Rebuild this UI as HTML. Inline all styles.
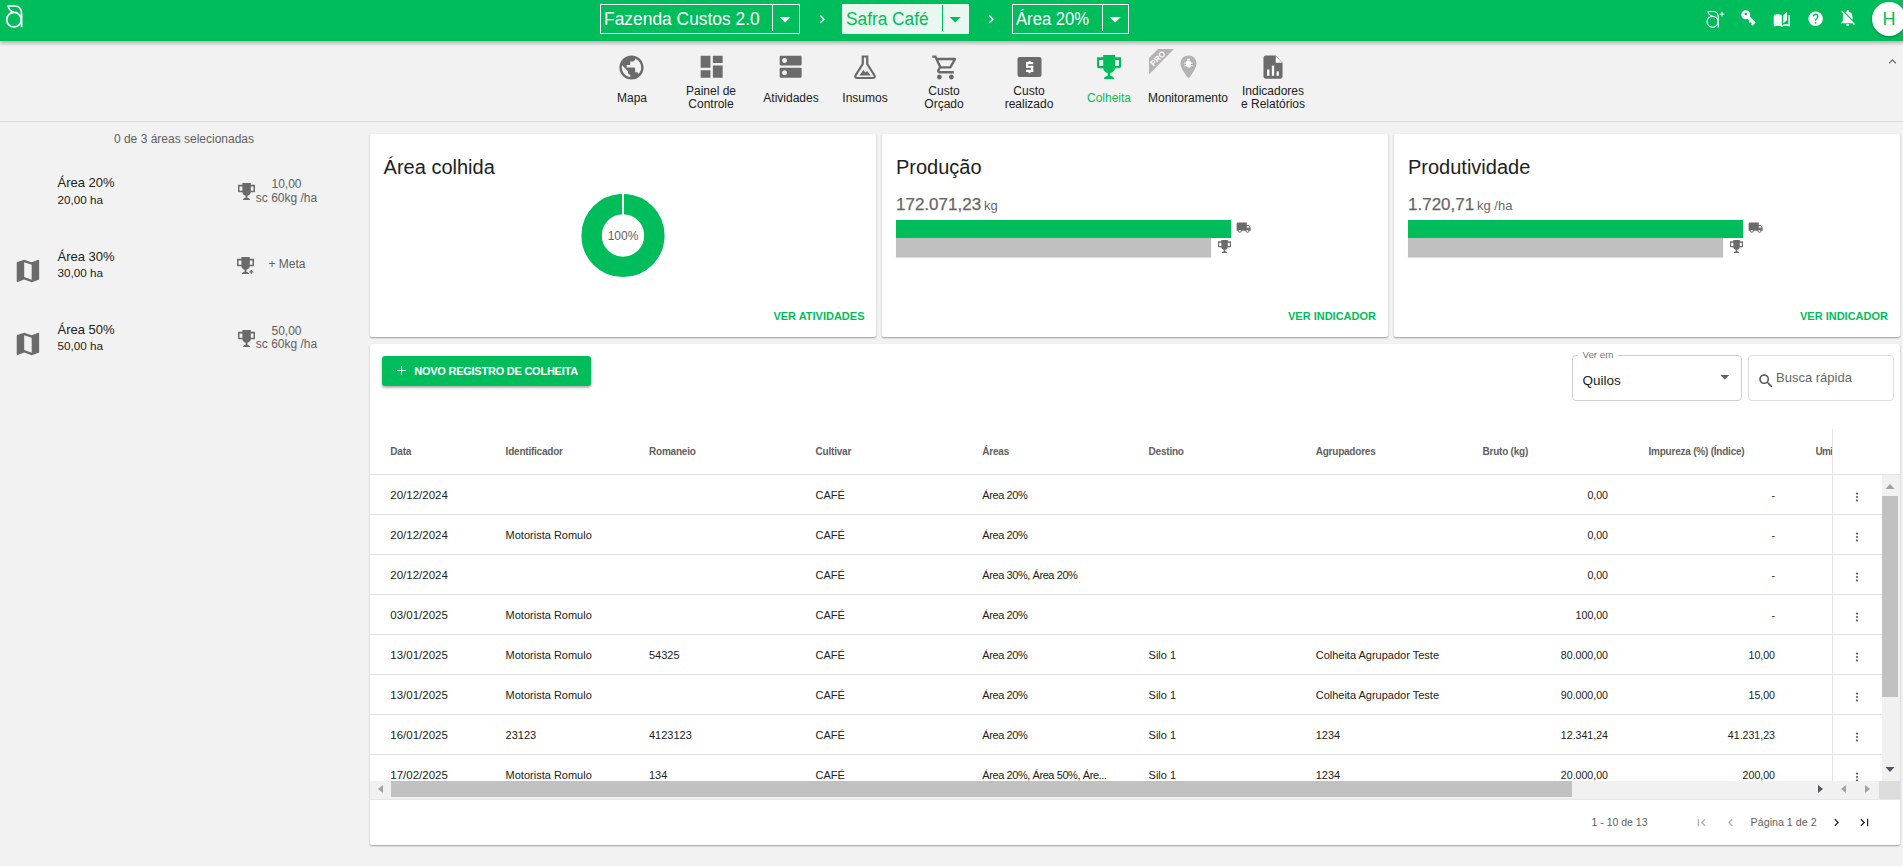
<!DOCTYPE html><html><head><meta charset="utf-8"><style>
html,body{margin:0;padding:0;width:1903px;height:866px;overflow:hidden;background:#F2F2F2;font-family:"Liberation Sans", sans-serif;}
body{position:relative;}
div,svg{box-sizing:border-box;}
</style></head><body>
<div style="position:absolute;left:0px;top:121px;width:1903px;height:1px;background:#DADADA;"></div>
<div style="position:absolute;left:370px;top:134px;width:506px;height:203px;background:#fff;border-radius:2px;box-shadow:0 1px 2px rgba(0,0,0,0.28),0 1px 1px rgba(0,0,0,0.10);"></div>
<div style="position:absolute;left:882px;top:134px;width:506px;height:203px;background:#fff;border-radius:2px;box-shadow:0 1px 2px rgba(0,0,0,0.28),0 1px 1px rgba(0,0,0,0.10);"></div>
<div style="position:absolute;left:1394px;top:134px;width:506px;height:203px;background:#fff;border-radius:2px;box-shadow:0 1px 2px rgba(0,0,0,0.28),0 1px 1px rgba(0,0,0,0.10);"></div>
<div style="position:absolute;left:370px;top:344px;width:1530px;height:501px;background:#fff;border-radius:2px;box-shadow:0 1px 2px rgba(0,0,0,0.28),0 1px 1px rgba(0,0,0,0.10);"></div>
<div style="position:absolute;left:0px;top:0px;width:1903px;height:41px;background:#00BD5C;box-shadow:0 2px 4px rgba(0,0,0,0.3);"></div>
<svg style="position:absolute;left:0px;top:0px;" width="30" height="30" viewBox="0 0 30 30" preserveAspectRatio="none"><g fill="none" stroke="#fff" stroke-width="1.7"><circle cx="14" cy="19.7" r="7.3"/><path d="M21.6 27.2 V14 C21.6 8.8 19.2 6 14.8 6 H8.2 C8.6 9.3 10.6 11.4 14 12.4"/></g></svg>
<div style="position:absolute;left:600px;top:4px;width:200px;height:30px;border:1px solid #fff;"></div>
<div style="position:absolute;left:772px;top:5px;width:1px;height:26.3px;background:#fff;"></div>
<div style="position:absolute;left:604px;top:9.96px;font-size:18px;line-height:18px;color:#fff;font-weight:400;white-space:nowrap;display:inline-block;transform:scaleX(0.967);transform-origin:0 0;">Fazenda Custos 2.0</div>
<svg style="position:absolute;left:772.3px;top:5.8px;" width="26.4" height="26.4" viewBox="0 0 24 24" preserveAspectRatio="none"><path d="M7 10l5 5 5-5z" fill="#fff" fill-rule="evenodd"/></svg>
<div style="position:absolute;left:842px;top:4px;width:127px;height:30px;background:#E8F7EF;"></div>
<div style="position:absolute;left:942px;top:5px;width:1px;height:26.3px;background:#00BD5C;"></div>
<div style="position:absolute;left:846px;top:9.96px;font-size:18px;line-height:18px;color:#00BD5C;font-weight:400;white-space:nowrap;display:inline-block;transform:scaleX(0.96);transform-origin:0 0;">Safra Café</div>
<svg style="position:absolute;left:942.3px;top:5.8px;" width="26.4" height="26.4" viewBox="0 0 24 24" preserveAspectRatio="none"><path d="M7 10l5 5 5-5z" fill="#00BD5C" fill-rule="evenodd"/></svg>
<div style="position:absolute;left:1012px;top:4px;width:117px;height:30px;border:1px solid #fff;"></div>
<div style="position:absolute;left:1102px;top:5px;width:1px;height:26.3px;background:#fff;"></div>
<div style="position:absolute;left:1016px;top:9.96px;font-size:18px;line-height:18px;color:#fff;font-weight:400;white-space:nowrap;display:inline-block;transform:scaleX(0.924);transform-origin:0 0;">Área 20%</div>
<svg style="position:absolute;left:1102.3px;top:5.8px;" width="26.4" height="26.4" viewBox="0 0 24 24" preserveAspectRatio="none"><path d="M7 10l5 5 5-5z" fill="#fff" fill-rule="evenodd"/></svg>
<svg style="position:absolute;left:813.8px;top:10.6px;" width="16.4" height="16.4" viewBox="0 0 24 24" preserveAspectRatio="none"><path d="M10 6L8.59 7.41 13.17 12l-4.58 4.59L10 18l6-6z" fill="#fff" fill-rule="evenodd"/></svg>
<svg style="position:absolute;left:982.8px;top:10.6px;" width="16.4" height="16.4" viewBox="0 0 24 24" preserveAspectRatio="none"><path d="M10 6L8.59 7.41 13.17 12l-4.58 4.59L10 18l6-6z" fill="#fff" fill-rule="evenodd"/></svg>
<svg style="position:absolute;left:1701.96px;top:7.47px;" width="22.6" height="22.6" viewBox="0 0 30 30" preserveAspectRatio="none"><g fill="none" stroke="#fff" stroke-width="1.5"><circle cx="14" cy="19.7" r="7.3"/><path d="M21.6 27.2 V14 C21.6 8.8 19.2 6 14.8 6 H8.2 C8.6 9.3 10.6 11.4 14 12.4"/></g><path d="M26.6 6.4 V12.5 M23.5 9.47 H29.7" stroke="#fff" stroke-width="1.25"/></svg>
<svg style="position:absolute;left:1738px;top:7px;" width="22" height="22" viewBox="0 0 22 22" preserveAspectRatio="none"><g transform="translate(7.7 7.7) rotate(45)"><path fill="#fff" fill-rule="evenodd" d="M4.5 0A4.5 4.5 0 1 1 -4.5 0A4.5 4.5 0 1 1 4.5 0ZM0.8 -0.6A1.3 1.3 0 1 0 -1.8 -0.6A1.3 1.3 0 1 0 0.8 -0.6Z"/><path fill="#fff" d="M3.5 -1.6H12.6V2.9H10.6V1.9H8.8V2.9H7V1.6H3.5Z"/></g></svg>
<svg style="position:absolute;left:1773.2px;top:10.6px;" width="17.6" height="17.6" viewBox="0 0 24 24" preserveAspectRatio="none"><path d="M19 1l-5 5v11l5-4.5V1zM1 6v14.65c0 .25.25.5.5.5.1 0 .15-.05.25-.05C3.1 20.45 5.05 20 6.5 20c1.95 0 4.050.4 5.5 1.5V6c-1.45-1.1-3.55-1.5-5.5-1.5S2.45 4.9 1 6zm22 13.5V6c-.6-.45-1.25-.75-2-1v13.5c-1.1-.35-2.3-.5-3.5-.5-1.7 0-4.15.65-5.5 1.5v2c1.350-.85 3.8-1.5 5.5-1.5 1.65 0 3.35.3 4.75 1.05.1.05.15.05.25.05.25 0 .5-.25.5-.5v-1.1z" fill="#fff" fill-rule="evenodd"/></svg>
<svg style="position:absolute;left:1807px;top:9.9px;" width="17.3" height="17.3" viewBox="0 0 24 24" preserveAspectRatio="none"><path d="M12 2C6.48 2 2 6.48 2 12s4.48 10 10 10 10-4.48 10-10S17.52 2 12 2zm1 17h-2v-2h2v2zm2.07-7.75l-.9.92C13.45 12.9 13 13.5 13 15h-2v-.5c0-1.1.45-2.1 1.17-2.83l1.24-1.26c.37-.36.59-.86.59-1.41 0-1.1-.9-2-2-2s-2 .9-2 2H8c0-2.21 1.79-4 4-4s4 1.79 4 4c0 .88-.36 1.68-.93 2.25z" fill="#fff" fill-rule="evenodd"/></svg>
<svg style="position:absolute;left:1838.2px;top:8px;" width="19.4" height="19.4" viewBox="0 0 24 24" preserveAspectRatio="none"><path d="M20 18.69L7.84 6.14 5.27 3.49 4 4.76l2.8 2.8v.01c-.52.99-.8 2.16-.8 3.42v5l-2 2v1h13.73l2 2L21 19.72l-1-1.03zM12 22c1.11 0 2-.89 2-2h-4c0 1.11.89 2 2 2zm6-7.32V11c0-3.08-1.64-5.64-4.5-6.32V4c0-.83-.67-1.5-1.5-1.5s-1.5.67-1.5 1.5v.68c-.15.03-.29.08-.42.12-.1.03-.2.07-.3.11h-.01c-.01 0-.01 0-.02.01-.23.09-.46.2-.68.31 0 0-.01 0-.01.01L18 14.68z" fill="#fff" fill-rule="evenodd"/></svg>
<div style="position:absolute;left:1872px;top:2px;width:34px;height:34px;border-radius:50%;background:#fff;box-shadow:0 1px 3px rgba(0,0,0,0.3);"></div>
<div style="position:absolute;left:1869.0px;width:40px;text-align:center;top:9.76px;font-size:18px;line-height:18px;color:#00BD5C;font-weight:400;white-space:nowrap;">H</div>
<svg style="position:absolute;left:617.1px;top:52.7px;" width="29" height="29" viewBox="0 0 24 24" preserveAspectRatio="none"><path d="M12 2C6.48 2 2 6.48 2 12s4.48 10 10 10 10-4.48 10-10S17.52 2 12 2zm-1 17.93c-3.95-.49-7-3.85-7-7.93 0-.62.08-1.21.21-1.79L9 15v1c0 1.1.9 2 2 2v1.93zm6.9-2.54c-.26-.81-1-1.39-1.9-1.39h-1v-3c0-.55-.45-1-1-1H8v-2h2c.55 0 1-.45 1-1V7h2c1.1 0 2-.9 2-2v-.41c2.93 1.19 5 4.06 5 7.41 0 2.08-.8 3.97-2.1 5.39z" fill="#6B6B6B" fill-rule="evenodd"/></svg>
<div style="position:absolute;left:572.0px;width:120px;text-align:center;top:91.64px;font-size:12px;line-height:12px;color:#212121;font-weight:400;white-space:nowrap;">Mapa</div>
<svg style="position:absolute;left:696.8px;top:52.3px;" width="29.3" height="29.3" viewBox="0 0 24 24" preserveAspectRatio="none"><path d="M3 13h8V3H3v10zm0 8h8v-6H3v6zm10 0h8V11h-8v10zm0-18v6h8V3h-8z" fill="#6B6B6B" fill-rule="evenodd"/></svg>
<div style="position:absolute;left:651.0px;width:120px;text-align:center;top:85.14px;font-size:12px;line-height:12px;color:#212121;font-weight:400;white-space:nowrap;">Painel de</div>
<div style="position:absolute;left:651.0px;width:120px;text-align:center;top:97.84px;font-size:12px;line-height:12px;color:#212121;font-weight:400;white-space:nowrap;">Controle</div>
<svg style="position:absolute;left:776px;top:52.3px;" width="29.3" height="29.3" viewBox="0 0 24 24" preserveAspectRatio="none"><path d="M20 13H4c-.55 0-1 .45-1 1v6c0 .55.45 1 1 1h16c.55 0 1-.45 1-1v-6c0-.55-.45-1-1-1zM7 19c-1.1 0-2-.9-2-2s.9-2 2-2 2 .9 2 2-.9 2-2 2zM20 3H4c-.55 0-1 .45-1 1v6c0 .55.45 1 1 1h16c.55 0 1-.45 1-1V4c0-.55-.45-1-1-1zM7 9c-1.1 0-2-.9-2-2s.9-2 2-2 2 .9 2 2-.9 2-2 2z" fill="#6B6B6B" fill-rule="evenodd"/></svg>
<div style="position:absolute;left:731.0px;width:120px;text-align:center;top:91.64px;font-size:12px;line-height:12px;color:#212121;font-weight:400;white-space:nowrap;">Atividades</div>
<svg style="position:absolute;left:853px;top:54px;" width="24" height="26" viewBox="0 0 24 26" preserveAspectRatio="none"><g transform="translate(12 0) scale(1.12 1) translate(-12 0)"><g fill="none" stroke="#6B6B6B" stroke-width="2" stroke-linejoin="round"><path d="M9 2.5 H15 M10 3 V10 L3.5 21.5 C3 22.8 3.6 24 5 24 H19 C20.4 24 21 22.8 20.5 21.5 L14 10 V3"/></g><path d="M7 21.5 L10.5 16 L12.5 18.5 L14 17 L17 21.5 Z" fill="#6B6B6B"/></g></svg>
<div style="position:absolute;left:805.0px;width:120px;text-align:center;top:91.64px;font-size:12px;line-height:12px;color:#212121;font-weight:400;white-space:nowrap;">Insumos</div>
<svg style="position:absolute;left:930.5px;top:52.6px;" width="28.8" height="28.8" viewBox="0 0 24 24" preserveAspectRatio="none"><path d="M15.55 13c.75 0 1.41-.41 1.75-1.03l3.58-6.49c.37-.66-.11-1.48-.87-1.48H5.21l-.94-2H1v2h2l3.6 7.59-1.35 2.44C4.52 15.37 5.48 17 7 17h12v-2H7l1.1-2h7.45zM6.16 6h12.15l-2.76 5H8.53L6.16 6zM7 18c-1.1 0-1.99.9-1.99 2S5.9 22 7 22s2-.9 2-2-.9-2-2-2zm10 0c-1.1 0-1.99.9-1.99 2s.89 2 1.99 2 2-.9 2-2-.9-2-2-2z" fill="#6B6B6B" fill-rule="evenodd"/></svg>
<div style="position:absolute;left:884.0px;width:120px;text-align:center;top:85.14px;font-size:12px;line-height:12px;color:#212121;font-weight:400;white-space:nowrap;">Custo</div>
<div style="position:absolute;left:884.0px;width:120px;text-align:center;top:97.84px;font-size:12px;line-height:12px;color:#212121;font-weight:400;white-space:nowrap;">Orçado</div>
<svg style="position:absolute;left:1016px;top:56px;" width="26" height="22" viewBox="0 0 26 22" preserveAspectRatio="none"><rect x="1.5" y="1.1" width="24" height="19.8" rx="2.2" fill="#6B6B6B"/><rect x="12.6" y="4.9" width="2.0" height="1.3" fill="#fff"/><rect x="10.0" y="6.0" width="7.2" height="2.1" fill="#fff"/><rect x="10.0" y="6.0" width="2.2" height="5.8" fill="#fff"/><rect x="10.0" y="9.8" width="7.2" height="2.0" fill="#fff"/><rect x="15.0" y="9.8" width="2.2" height="6.2" fill="#fff"/><rect x="10.0" y="13.8" width="7.2" height="2.2" fill="#fff"/><rect x="12.6" y="16.0" width="2.0" height="1.2" fill="#fff"/></svg>
<div style="position:absolute;left:969.0px;width:120px;text-align:center;top:85.14px;font-size:12px;line-height:12px;color:#212121;font-weight:400;white-space:nowrap;">Custo</div>
<div style="position:absolute;left:969.0px;width:120px;text-align:center;top:97.84px;font-size:12px;line-height:12px;color:#212121;font-weight:400;white-space:nowrap;">realizado</div>
<svg style="position:absolute;left:1096.9px;top:54.9px;" width="24" height="24" viewBox="0 0 24 24" preserveAspectRatio="none"><path d="M6.2 0H18.1V2.3H24V11.5Q24 13.2 22.3 13.2H18.1C17.8 15.6 15.8 17.5 13.3 17.9V20.8C15.5 21 16.9 22.5 17.1 24H6.9C7.1 22.5 8.5 21 10.7 20.8V17.9C8.2 17.5 6.5 15.6 6.2 13.2H1.7Q0 13.2 0 11.5V2.3H6.2ZM2.1 5.1V11.1H6.2V5.1ZM18.1 5.1V11.1H21.9V5.1Z" fill="#00BD5C" fill-rule="evenodd"/></svg>
<div style="position:absolute;left:1049.0px;width:120px;text-align:center;top:91.64px;font-size:12px;line-height:12px;color:#00BD5C;font-weight:400;white-space:nowrap;">Colheita</div>
<svg style="position:absolute;left:1148px;top:48px;" width="27" height="27" viewBox="0 0 27 27" preserveAspectRatio="none"><path d="M10.1 1 H25.9 L1 26.6 V10 Z" fill="#B3B3B3"/><text x="9.6" y="13.4" font-family="Liberation Sans" font-weight="700" font-size="8.2" fill="#fff" text-anchor="middle" transform="rotate(-45 9.6 10.4)">PRO</text></svg>
<svg style="position:absolute;left:1180px;top:55px;" width="17" height="24" viewBox="0 0 17 24" preserveAspectRatio="none"><path d="M8.5 0.5 C4 0.5 0.5 4 0.5 8.5 C0.5 14 8.5 23.5 8.5 23.5 C8.5 23.5 16.5 14 16.5 8.5 C16.5 4 13 0.5 8.5 0.5 Z" fill="#B3B3B3"/><g fill="#fff"><rect x="6" y="5.5" width="5" height="7" rx="2.2"/><rect x="4.5" y="7.5" width="8" height="1.2"/><rect x="4.5" y="10" width="8" height="1.2"/><rect x="7" y="3.8" width="3" height="1.5"/></g></svg>
<div style="position:absolute;left:1128.0px;width:120px;text-align:center;top:91.64px;font-size:12px;line-height:12px;color:#212121;font-weight:400;white-space:nowrap;">Monitoramento</div>
<svg style="position:absolute;left:1263px;top:54.9px;" width="20" height="24.2" viewBox="0 0 22 25" preserveAspectRatio="none"><path d="M3 0.5 H14 L21.5 8 V22 C21.5 23.4 20.4 24.5 19 24.5 H3 C1.6 24.5 0.5 23.4 0.5 22 V3 C0.5 1.6 1.6 0.5 3 0.5 Z" fill="#6B6B6B"/><path d="M14 1 V8 H21 Z" fill="#fff"/><g fill="#fff"><rect x="4.5" y="15" width="2.6" height="6.5"/><rect x="9.7" y="11" width="2.6" height="10.5"/><rect x="14.9" y="17" width="2.6" height="4.5"/></g></svg>
<div style="position:absolute;left:1213.0px;width:120px;text-align:center;top:85.14px;font-size:12px;line-height:12px;color:#212121;font-weight:400;white-space:nowrap;">Indicadores</div>
<div style="position:absolute;left:1213.0px;width:120px;text-align:center;top:97.84px;font-size:12px;line-height:12px;color:#212121;font-weight:400;white-space:nowrap;">e Relatórios</div>
<svg style="position:absolute;left:1885px;top:54px;" width="15" height="15" viewBox="0 0 24 24" preserveAspectRatio="none"><path d="M12 8l-6 6 1.41 1.41L12 10.83l4.59 4.58L18 14z" fill="#6B6B6B" fill-rule="evenodd"/></svg>
<div style="position:absolute;left:34.0px;width:300px;text-align:center;top:132.94px;font-size:12px;line-height:12px;color:#616161;font-weight:400;white-space:nowrap;">0 de 3 áreas selecionadas</div>
<div style="position:absolute;left:57.5px;top:176.00px;font-size:13px;line-height:13px;color:#212121;font-weight:400;white-space:nowrap;">Área 20%</div>
<div style="position:absolute;left:57.5px;top:193.50px;font-size:11.7px;line-height:11.7px;color:#212121;font-weight:400;white-space:nowrap;">20,00 ha</div>
<div style="position:absolute;left:57.5px;top:249.80px;font-size:13px;line-height:13px;color:#212121;font-weight:400;white-space:nowrap;">Área 30%</div>
<div style="position:absolute;left:57.5px;top:267.30px;font-size:11.7px;line-height:11.7px;color:#212121;font-weight:400;white-space:nowrap;">30,00 ha</div>
<div style="position:absolute;left:57.5px;top:322.60px;font-size:13px;line-height:13px;color:#212121;font-weight:400;white-space:nowrap;">Área 50%</div>
<div style="position:absolute;left:57.5px;top:340.10px;font-size:11.7px;line-height:11.7px;color:#212121;font-weight:400;white-space:nowrap;">50,00 ha</div>
<svg style="position:absolute;left:12.9px;top:255.7px;" width="29.9" height="29.9" viewBox="0 0 24 24" preserveAspectRatio="none"><path d="M20.5 3l-.16.03L15 5.1 9 3 3.36 4.9c-.21.07-.36.25-.36.48V20.5c0 .28.22.5.5.5l.16-.03L9 18.9l6 2.1 5.64-1.9c.21-.07.36-.25.36-.48V3.5c0-.28-.22-.5-.5-.5zM15 19l-6-2.11V5l6 2.11V19z" fill="#6B6B6B" fill-rule="evenodd"/></svg>
<svg style="position:absolute;left:12.9px;top:328.8px;" width="29.9" height="29.9" viewBox="0 0 24 24" preserveAspectRatio="none"><path d="M20.5 3l-.16.03L15 5.1 9 3 3.36 4.9c-.21.07-.36.25-.36.48V20.5c0 .28.22.5.5.5l.16-.03L9 18.9l6 2.1 5.64-1.9c.21-.07.36-.25.36-.48V3.5c0-.28-.22-.5-.5-.5zM15 19l-6-2.11V5l6 2.11V19z" fill="#6B6B6B" fill-rule="evenodd"/></svg>
<svg style="position:absolute;left:238px;top:183px;" width="17" height="17" viewBox="0 0 24 24" preserveAspectRatio="none"><path d="M6.2 0H18.1V2.3H24V11.5Q24 13.2 22.3 13.2H18.1C17.8 15.6 15.8 17.5 13.3 17.9V20.8C15.5 21 16.9 22.5 17.1 24H6.9C7.1 22.5 8.5 21 10.7 20.8V17.9C8.2 17.5 6.5 15.6 6.2 13.2H1.7Q0 13.2 0 11.5V2.3H6.2ZM2.1 5.1V11.1H6.2V5.1ZM18.1 5.1V11.1H21.9V5.1Z" fill="#6B6B6B" fill-rule="evenodd"/></svg>
<div style="position:absolute;left:236.5px;width:100px;text-align:center;top:178.24px;font-size:12px;line-height:12px;color:#616161;font-weight:400;white-space:nowrap;">10,00</div>
<div style="position:absolute;left:236.5px;width:100px;text-align:center;top:191.84px;font-size:12px;line-height:12px;color:#616161;font-weight:400;white-space:nowrap;">sc 60kg /ha</div>
<svg style="position:absolute;left:237px;top:257px;" width="17" height="17" viewBox="0 0 24 24" preserveAspectRatio="none"><path d="M6.2 0H18.1V2.3H24V11.5Q24 13.2 22.3 13.2H18.1C17.8 15.6 15.8 17.5 13.3 17.9V20.8C15.5 21 16.9 22.5 17.1 24H6.9C7.1 22.5 8.5 21 10.7 20.8V17.9C8.2 17.5 6.5 15.6 6.2 13.2H1.7Q0 13.2 0 11.5V2.3H6.2ZM2.1 5.1V11.1H6.2V5.1ZM18.1 5.1V11.1H21.9V5.1Z" fill="#6B6B6B" fill-rule="evenodd"/><path d="M17.5 21 H23 M20.2 18.2 V23.8" stroke="#6B6B6B" stroke-width="2"/></svg>
<div style="position:absolute;left:268.4px;top:257.64px;font-size:12px;line-height:12px;color:#616161;font-weight:400;white-space:nowrap;">+ Meta</div>
<svg style="position:absolute;left:238px;top:330px;" width="17" height="17" viewBox="0 0 24 24" preserveAspectRatio="none"><path d="M6.2 0H18.1V2.3H24V11.5Q24 13.2 22.3 13.2H18.1C17.8 15.6 15.8 17.5 13.3 17.9V20.8C15.5 21 16.9 22.5 17.1 24H6.9C7.1 22.5 8.5 21 10.7 20.8V17.9C8.2 17.5 6.5 15.6 6.2 13.2H1.7Q0 13.2 0 11.5V2.3H6.2ZM2.1 5.1V11.1H6.2V5.1ZM18.1 5.1V11.1H21.9V5.1Z" fill="#6B6B6B" fill-rule="evenodd"/></svg>
<div style="position:absolute;left:236.5px;width:100px;text-align:center;top:324.84px;font-size:12px;line-height:12px;color:#616161;font-weight:400;white-space:nowrap;">50,00</div>
<div style="position:absolute;left:236.5px;width:100px;text-align:center;top:338.44px;font-size:12px;line-height:12px;color:#616161;font-weight:400;white-space:nowrap;">sc 60kg /ha</div>
<div style="position:absolute;left:383.6px;top:157.27px;font-size:20px;line-height:20px;color:#212121;font-weight:400;white-space:nowrap;">Área colhida</div>
<svg style="position:absolute;left:581px;top:194px;" width="84" height="84" viewBox="0 0 84 84" preserveAspectRatio="none"><circle cx="42" cy="41.5" r="31.4" fill="none" stroke="#00BD5C" stroke-width="20.4"/><rect x="41" y="0" width="2" height="21" fill="#fff"/></svg>
<div style="position:absolute;left:593.0px;width:60px;text-align:center;top:229.64px;font-size:12px;line-height:12px;color:#616161;font-weight:400;white-space:nowrap;">100%</div>
<div style="position:absolute;left:664.5px;width:200px;text-align:right;top:311.09px;font-size:11px;line-height:11px;color:#00BD5C;font-weight:700;white-space:nowrap;">VER ATIVIDADES</div>
<div style="position:absolute;left:896px;top:157.27px;font-size:20px;line-height:20px;color:#212121;font-weight:400;white-space:nowrap;">Produção</div>
<div style="position:absolute;left:896px;top:195.61px;font-size:17px;line-height:17px;color:#666666;font-weight:400;white-space:nowrap;-webkit-text-stroke:0.25px #666666;">172.071,23</div>
<div style="position:absolute;left:984px;top:199.00px;font-size:13px;line-height:13px;color:#666666;font-weight:400;white-space:nowrap;">kg</div>
<div style="position:absolute;left:896px;top:220px;width:335px;height:17.5px;background:#00BD5C;"></div>
<div style="position:absolute;left:896px;top:238px;width:315px;height:19px;background:#C0C0C0;box-shadow:0 1px 1px rgba(0,0,0,0.12);"></div>
<svg style="position:absolute;left:1236.4px;top:219.8px;" width="15.3" height="15.3" viewBox="0 0 24 24" preserveAspectRatio="none"><path d="M20 8h-3V4H3c-1.1 0-2 .9-2 2v11h2c0 1.66 1.34 3 3 3s3-1.34 3-3h6c0 1.66 1.34 3 3 3s3-1.34 3-3h2v-5l-3-4zM6 18.5c-.83 0-1.5-.67-1.5-1.5s.67-1.5 1.5-1.5 1.5.67 1.5 1.5-.67 1.5-1.5 1.5zm13.5-9l1.96 2.5H17V9.5h2.5zm-1.5 9c-.83 0-1.5-.67-1.5-1.5s.67-1.5 1.5-1.5 1.5.67 1.5 1.5-.67 1.5-1.5 1.5z" fill="#6B6B6B" fill-rule="evenodd"/></svg>
<svg style="position:absolute;left:1218px;top:240px;" width="13" height="13" viewBox="0 0 24 24" preserveAspectRatio="none"><path d="M6.2 0H18.1V2.3H24V11.5Q24 13.2 22.3 13.2H18.1C17.8 15.6 15.8 17.5 13.3 17.9V20.8C15.5 21 16.9 22.5 17.1 24H6.9C7.1 22.5 8.5 21 10.7 20.8V17.9C8.2 17.5 6.5 15.6 6.2 13.2H1.7Q0 13.2 0 11.5V2.3H6.2ZM2.1 5.1V11.1H6.2V5.1ZM18.1 5.1V11.1H21.9V5.1Z" fill="#6B6B6B" fill-rule="evenodd"/></svg>
<div style="position:absolute;left:1176px;width:200px;text-align:right;top:310.99px;font-size:11px;line-height:11px;color:#00BD5C;font-weight:700;white-space:nowrap;">VER INDICADOR</div>
<div style="position:absolute;left:1408px;top:157.27px;font-size:20px;line-height:20px;color:#212121;font-weight:400;white-space:nowrap;">Produtividade</div>
<div style="position:absolute;left:1408px;top:195.61px;font-size:17px;line-height:17px;color:#666666;font-weight:400;white-space:nowrap;-webkit-text-stroke:0.25px #666666;">1.720,71</div>
<div style="position:absolute;left:1477px;top:199.00px;font-size:13px;line-height:13px;color:#666666;font-weight:400;white-space:nowrap;">kg /ha</div>
<div style="position:absolute;left:1408px;top:220px;width:335px;height:17.5px;background:#00BD5C;"></div>
<div style="position:absolute;left:1408px;top:238px;width:315px;height:19px;background:#C0C0C0;box-shadow:0 1px 1px rgba(0,0,0,0.12);"></div>
<svg style="position:absolute;left:1748.4px;top:219.8px;" width="15.3" height="15.3" viewBox="0 0 24 24" preserveAspectRatio="none"><path d="M20 8h-3V4H3c-1.1 0-2 .9-2 2v11h2c0 1.66 1.34 3 3 3s3-1.34 3-3h6c0 1.66 1.34 3 3 3s3-1.34 3-3h2v-5l-3-4zM6 18.5c-.83 0-1.5-.67-1.5-1.5s.67-1.5 1.5-1.5 1.5.67 1.5 1.5-.67 1.5-1.5 1.5zm13.5-9l1.96 2.5H17V9.5h2.5zm-1.5 9c-.83 0-1.5-.67-1.5-1.5s.67-1.5 1.5-1.5 1.5.67 1.5 1.5-.67 1.5-1.5 1.5z" fill="#6B6B6B" fill-rule="evenodd"/></svg>
<svg style="position:absolute;left:1730px;top:240px;" width="13" height="13" viewBox="0 0 24 24" preserveAspectRatio="none"><path d="M6.2 0H18.1V2.3H24V11.5Q24 13.2 22.3 13.2H18.1C17.8 15.6 15.8 17.5 13.3 17.9V20.8C15.5 21 16.9 22.5 17.1 24H6.9C7.1 22.5 8.5 21 10.7 20.8V17.9C8.2 17.5 6.5 15.6 6.2 13.2H1.7Q0 13.2 0 11.5V2.3H6.2ZM2.1 5.1V11.1H6.2V5.1ZM18.1 5.1V11.1H21.9V5.1Z" fill="#6B6B6B" fill-rule="evenodd"/></svg>
<div style="position:absolute;left:1688px;width:200px;text-align:right;top:310.99px;font-size:11px;line-height:11px;color:#00BD5C;font-weight:700;white-space:nowrap;">VER INDICADOR</div>
<div style="position:absolute;left:382px;top:356px;width:209px;height:30px;background:#00BD5C;border-radius:3px;box-shadow:0 2px 2px rgba(0,0,0,0.22),0 1px 4px rgba(0,0,0,0.12);"></div>
<div style="position:absolute;left:397px;top:370px;width:9px;height:1.4px;background:#fff;"></div>
<div style="position:absolute;left:400.8px;top:366.2px;width:1.4px;height:9px;background:#fff;"></div>
<div style="position:absolute;left:414.2px;top:366.09px;font-size:11px;line-height:11px;color:#fff;font-weight:700;white-space:nowrap;letter-spacing:-0.24px;">NOVO REGISTRO DE COLHEITA</div>
<div style="position:absolute;left:1572px;top:355px;width:170px;height:45.5px;border:1px solid #CFCFCF;border-radius:4px;"></div>
<div style="position:absolute;left:1578px;top:352px;width:40px;height:6px;background:#fff;"></div>
<div style="position:absolute;left:1582.4px;top:349.70px;font-size:9.8px;line-height:9.8px;color:#757575;font-weight:400;white-space:nowrap;">Ver em</div>
<div style="position:absolute;left:1582.4px;top:374.07px;font-size:13.5px;line-height:13.5px;color:#212121;font-weight:400;white-space:nowrap;">Quilos</div>
<svg style="position:absolute;left:1713.7px;top:366px;" width="21.6" height="21.6" viewBox="0 0 24 24" preserveAspectRatio="none"><path d="M7 10l5 5 5-5z" fill="#616161" fill-rule="evenodd"/></svg>
<div style="position:absolute;left:1748px;top:355px;width:146px;height:45.5px;border:1px solid #DDDDDD;border-radius:4px;"></div>
<svg style="position:absolute;left:1757.2px;top:371.5px;" width="18.1" height="18.1" viewBox="0 0 24 24" preserveAspectRatio="none"><path d="M15.5 14h-.79l-.28-.27C15.41 12.59 16 11.11 16 9.5 16 5.91 13.09 3 9.5 3S3 5.91 3 9.5 5.91 16 9.5 16c1.61 0 3.09-.59 4.23-1.57l.27.28v.79l5 4.99L20.49 19l-4.99-5zm-6 0C7.01 14 5 11.99 5 9.5S7.01 5 9.5 5 14 7.01 14 9.5 11.99 14 9.5 14z" fill="#555" fill-rule="evenodd"/></svg>
<div style="position:absolute;left:1776px;top:371.30px;font-size:13px;line-height:13px;color:#666666;font-weight:400;white-space:nowrap;">Busca rápida</div>
<div style="position:absolute;left:390.3px;top:446.84px;font-size:10px;line-height:10px;color:#616161;font-weight:700;white-space:nowrap;letter-spacing:-0.22px;">Data</div>
<div style="position:absolute;left:505.6px;top:446.84px;font-size:10px;line-height:10px;color:#616161;font-weight:700;white-space:nowrap;letter-spacing:-0.22px;">Identificador</div>
<div style="position:absolute;left:649px;top:446.84px;font-size:10px;line-height:10px;color:#616161;font-weight:700;white-space:nowrap;letter-spacing:-0.22px;">Romaneio</div>
<div style="position:absolute;left:815.6px;top:446.84px;font-size:10px;line-height:10px;color:#616161;font-weight:700;white-space:nowrap;letter-spacing:-0.22px;">Cultivar</div>
<div style="position:absolute;left:982.3px;top:446.84px;font-size:10px;line-height:10px;color:#616161;font-weight:700;white-space:nowrap;letter-spacing:-0.22px;">Áreas</div>
<div style="position:absolute;left:1148.6px;top:446.84px;font-size:10px;line-height:10px;color:#616161;font-weight:700;white-space:nowrap;letter-spacing:-0.22px;">Destino</div>
<div style="position:absolute;left:1315.7px;top:446.84px;font-size:10px;line-height:10px;color:#616161;font-weight:700;white-space:nowrap;letter-spacing:-0.22px;">Agrupadores</div>
<div style="position:absolute;left:1482.5px;top:446.84px;font-size:10px;line-height:10px;color:#616161;font-weight:700;white-space:nowrap;letter-spacing:-0.22px;">Bruto (kg)</div>
<div style="position:absolute;left:1648.5px;top:446.84px;font-size:10px;line-height:10px;color:#616161;font-weight:700;white-space:nowrap;letter-spacing:-0.22px;">Impureza (%) (Índice)</div>
<div style="position:absolute;left:1815.5px;top:440px;width:17px;height:20px;overflow:hidden;"><div style="position:absolute;left:0;top:6.84px;font-size:10px;line-height:10px;color:#616161;font-weight:700;white-space:nowrap;letter-spacing:-0.7px;">Umidade (%)</div></div>
<div style="position:absolute;left:370px;top:474px;width:1530px;height:1px;background:#E3E3E3;"></div>
<div style="position:absolute;left:370px;top:514px;width:1512px;height:1px;background:#E3E3E3;"></div>
<div style="position:absolute;left:390.3px;top:489.67px;font-size:11.5px;line-height:11.5px;color:#212121;font-weight:400;white-space:nowrap;">20/12/2024</div>
<div style="position:absolute;left:815.6px;top:490.09px;font-size:11px;line-height:11px;color:#212121;font-weight:400;white-space:nowrap;">CAFÉ</div>
<div style="position:absolute;left:982.3px;top:490.09px;font-size:11px;line-height:11px;color:#212121;font-weight:400;white-space:nowrap;letter-spacing:-0.42px;">Área 20%</div>
<div style="position:absolute;left:1488px;width:120px;text-align:right;top:490.43px;font-size:10.6px;line-height:10.6px;color:#212121;font-weight:400;white-space:nowrap;">0,00</div>
<div style="position:absolute;left:1655px;width:120px;text-align:right;top:490.43px;font-size:10.6px;line-height:10.6px;color:#212121;font-weight:400;white-space:nowrap;">-</div>
<svg style="position:absolute;left:1854.6px;top:491.5px;" width="4" height="10" viewBox="0 0 4 10" preserveAspectRatio="none"><path d="M2 0.3 L3.3 1.6 L2 2.9 L0.7 1.6Z M2 3.7 L3.3 5 L2 6.3 L0.7 5Z M2 7.1 L3.3 8.4 L2 9.7 L0.7 8.4Z" fill="#5A5A5A"/></svg>
<div style="position:absolute;left:370px;top:554px;width:1512px;height:1px;background:#E3E3E3;"></div>
<div style="position:absolute;left:390.3px;top:529.67px;font-size:11.5px;line-height:11.5px;color:#212121;font-weight:400;white-space:nowrap;">20/12/2024</div>
<div style="position:absolute;left:505.6px;top:530.09px;font-size:11px;line-height:11px;color:#212121;font-weight:400;white-space:nowrap;">Motorista Romulo</div>
<div style="position:absolute;left:815.6px;top:530.09px;font-size:11px;line-height:11px;color:#212121;font-weight:400;white-space:nowrap;">CAFÉ</div>
<div style="position:absolute;left:982.3px;top:530.09px;font-size:11px;line-height:11px;color:#212121;font-weight:400;white-space:nowrap;letter-spacing:-0.42px;">Área 20%</div>
<div style="position:absolute;left:1488px;width:120px;text-align:right;top:530.43px;font-size:10.6px;line-height:10.6px;color:#212121;font-weight:400;white-space:nowrap;">0,00</div>
<div style="position:absolute;left:1655px;width:120px;text-align:right;top:530.43px;font-size:10.6px;line-height:10.6px;color:#212121;font-weight:400;white-space:nowrap;">-</div>
<svg style="position:absolute;left:1854.6px;top:531.5px;" width="4" height="10" viewBox="0 0 4 10" preserveAspectRatio="none"><path d="M2 0.3 L3.3 1.6 L2 2.9 L0.7 1.6Z M2 3.7 L3.3 5 L2 6.3 L0.7 5Z M2 7.1 L3.3 8.4 L2 9.7 L0.7 8.4Z" fill="#5A5A5A"/></svg>
<div style="position:absolute;left:370px;top:594px;width:1512px;height:1px;background:#E3E3E3;"></div>
<div style="position:absolute;left:390.3px;top:569.67px;font-size:11.5px;line-height:11.5px;color:#212121;font-weight:400;white-space:nowrap;">20/12/2024</div>
<div style="position:absolute;left:815.6px;top:570.09px;font-size:11px;line-height:11px;color:#212121;font-weight:400;white-space:nowrap;">CAFÉ</div>
<div style="position:absolute;left:982.3px;top:570.09px;font-size:11px;line-height:11px;color:#212121;font-weight:400;white-space:nowrap;letter-spacing:-0.42px;">Área 30%, Área 20%</div>
<div style="position:absolute;left:1488px;width:120px;text-align:right;top:570.43px;font-size:10.6px;line-height:10.6px;color:#212121;font-weight:400;white-space:nowrap;">0,00</div>
<div style="position:absolute;left:1655px;width:120px;text-align:right;top:570.43px;font-size:10.6px;line-height:10.6px;color:#212121;font-weight:400;white-space:nowrap;">-</div>
<svg style="position:absolute;left:1854.6px;top:571.5px;" width="4" height="10" viewBox="0 0 4 10" preserveAspectRatio="none"><path d="M2 0.3 L3.3 1.6 L2 2.9 L0.7 1.6Z M2 3.7 L3.3 5 L2 6.3 L0.7 5Z M2 7.1 L3.3 8.4 L2 9.7 L0.7 8.4Z" fill="#5A5A5A"/></svg>
<div style="position:absolute;left:370px;top:634px;width:1512px;height:1px;background:#E3E3E3;"></div>
<div style="position:absolute;left:390.3px;top:609.67px;font-size:11.5px;line-height:11.5px;color:#212121;font-weight:400;white-space:nowrap;">03/01/2025</div>
<div style="position:absolute;left:505.6px;top:610.09px;font-size:11px;line-height:11px;color:#212121;font-weight:400;white-space:nowrap;">Motorista Romulo</div>
<div style="position:absolute;left:815.6px;top:610.09px;font-size:11px;line-height:11px;color:#212121;font-weight:400;white-space:nowrap;">CAFÉ</div>
<div style="position:absolute;left:982.3px;top:610.09px;font-size:11px;line-height:11px;color:#212121;font-weight:400;white-space:nowrap;letter-spacing:-0.42px;">Área 20%</div>
<div style="position:absolute;left:1488px;width:120px;text-align:right;top:610.43px;font-size:10.6px;line-height:10.6px;color:#212121;font-weight:400;white-space:nowrap;">100,00</div>
<div style="position:absolute;left:1655px;width:120px;text-align:right;top:610.43px;font-size:10.6px;line-height:10.6px;color:#212121;font-weight:400;white-space:nowrap;">-</div>
<svg style="position:absolute;left:1854.6px;top:611.5px;" width="4" height="10" viewBox="0 0 4 10" preserveAspectRatio="none"><path d="M2 0.3 L3.3 1.6 L2 2.9 L0.7 1.6Z M2 3.7 L3.3 5 L2 6.3 L0.7 5Z M2 7.1 L3.3 8.4 L2 9.7 L0.7 8.4Z" fill="#5A5A5A"/></svg>
<div style="position:absolute;left:370px;top:674px;width:1512px;height:1px;background:#E3E3E3;"></div>
<div style="position:absolute;left:390.3px;top:649.67px;font-size:11.5px;line-height:11.5px;color:#212121;font-weight:400;white-space:nowrap;">13/01/2025</div>
<div style="position:absolute;left:505.6px;top:650.09px;font-size:11px;line-height:11px;color:#212121;font-weight:400;white-space:nowrap;">Motorista Romulo</div>
<div style="position:absolute;left:649px;top:650.09px;font-size:11px;line-height:11px;color:#212121;font-weight:400;white-space:nowrap;">54325</div>
<div style="position:absolute;left:815.6px;top:650.09px;font-size:11px;line-height:11px;color:#212121;font-weight:400;white-space:nowrap;">CAFÉ</div>
<div style="position:absolute;left:982.3px;top:650.09px;font-size:11px;line-height:11px;color:#212121;font-weight:400;white-space:nowrap;letter-spacing:-0.42px;">Área 20%</div>
<div style="position:absolute;left:1148.6px;top:650.09px;font-size:11px;line-height:11px;color:#212121;font-weight:400;white-space:nowrap;">Silo 1</div>
<div style="position:absolute;left:1315.7px;top:650.09px;font-size:11px;line-height:11px;color:#212121;font-weight:400;white-space:nowrap;">Colheita Agrupador Teste</div>
<div style="position:absolute;left:1488px;width:120px;text-align:right;top:650.43px;font-size:10.6px;line-height:10.6px;color:#212121;font-weight:400;white-space:nowrap;">80.000,00</div>
<div style="position:absolute;left:1655px;width:120px;text-align:right;top:650.43px;font-size:10.6px;line-height:10.6px;color:#212121;font-weight:400;white-space:nowrap;">10,00</div>
<svg style="position:absolute;left:1854.6px;top:651.5px;" width="4" height="10" viewBox="0 0 4 10" preserveAspectRatio="none"><path d="M2 0.3 L3.3 1.6 L2 2.9 L0.7 1.6Z M2 3.7 L3.3 5 L2 6.3 L0.7 5Z M2 7.1 L3.3 8.4 L2 9.7 L0.7 8.4Z" fill="#5A5A5A"/></svg>
<div style="position:absolute;left:370px;top:714px;width:1512px;height:1px;background:#E3E3E3;"></div>
<div style="position:absolute;left:390.3px;top:689.67px;font-size:11.5px;line-height:11.5px;color:#212121;font-weight:400;white-space:nowrap;">13/01/2025</div>
<div style="position:absolute;left:505.6px;top:690.09px;font-size:11px;line-height:11px;color:#212121;font-weight:400;white-space:nowrap;">Motorista Romulo</div>
<div style="position:absolute;left:815.6px;top:690.09px;font-size:11px;line-height:11px;color:#212121;font-weight:400;white-space:nowrap;">CAFÉ</div>
<div style="position:absolute;left:982.3px;top:690.09px;font-size:11px;line-height:11px;color:#212121;font-weight:400;white-space:nowrap;letter-spacing:-0.42px;">Área 20%</div>
<div style="position:absolute;left:1148.6px;top:690.09px;font-size:11px;line-height:11px;color:#212121;font-weight:400;white-space:nowrap;">Silo 1</div>
<div style="position:absolute;left:1315.7px;top:690.09px;font-size:11px;line-height:11px;color:#212121;font-weight:400;white-space:nowrap;">Colheita Agrupador Teste</div>
<div style="position:absolute;left:1488px;width:120px;text-align:right;top:690.43px;font-size:10.6px;line-height:10.6px;color:#212121;font-weight:400;white-space:nowrap;">90.000,00</div>
<div style="position:absolute;left:1655px;width:120px;text-align:right;top:690.43px;font-size:10.6px;line-height:10.6px;color:#212121;font-weight:400;white-space:nowrap;">15,00</div>
<svg style="position:absolute;left:1854.6px;top:691.5px;" width="4" height="10" viewBox="0 0 4 10" preserveAspectRatio="none"><path d="M2 0.3 L3.3 1.6 L2 2.9 L0.7 1.6Z M2 3.7 L3.3 5 L2 6.3 L0.7 5Z M2 7.1 L3.3 8.4 L2 9.7 L0.7 8.4Z" fill="#5A5A5A"/></svg>
<div style="position:absolute;left:370px;top:754px;width:1512px;height:1px;background:#E3E3E3;"></div>
<div style="position:absolute;left:390.3px;top:729.67px;font-size:11.5px;line-height:11.5px;color:#212121;font-weight:400;white-space:nowrap;">16/01/2025</div>
<div style="position:absolute;left:505.6px;top:730.09px;font-size:11px;line-height:11px;color:#212121;font-weight:400;white-space:nowrap;">23123</div>
<div style="position:absolute;left:649px;top:730.09px;font-size:11px;line-height:11px;color:#212121;font-weight:400;white-space:nowrap;">4123123</div>
<div style="position:absolute;left:815.6px;top:730.09px;font-size:11px;line-height:11px;color:#212121;font-weight:400;white-space:nowrap;">CAFÉ</div>
<div style="position:absolute;left:982.3px;top:730.09px;font-size:11px;line-height:11px;color:#212121;font-weight:400;white-space:nowrap;letter-spacing:-0.42px;">Área 20%</div>
<div style="position:absolute;left:1148.6px;top:730.09px;font-size:11px;line-height:11px;color:#212121;font-weight:400;white-space:nowrap;">Silo 1</div>
<div style="position:absolute;left:1315.7px;top:730.09px;font-size:11px;line-height:11px;color:#212121;font-weight:400;white-space:nowrap;">1234</div>
<div style="position:absolute;left:1488px;width:120px;text-align:right;top:730.43px;font-size:10.6px;line-height:10.6px;color:#212121;font-weight:400;white-space:nowrap;">12.341,24</div>
<div style="position:absolute;left:1655px;width:120px;text-align:right;top:730.43px;font-size:10.6px;line-height:10.6px;color:#212121;font-weight:400;white-space:nowrap;">41.231,23</div>
<svg style="position:absolute;left:1854.6px;top:731.5px;" width="4" height="10" viewBox="0 0 4 10" preserveAspectRatio="none"><path d="M2 0.3 L3.3 1.6 L2 2.9 L0.7 1.6Z M2 3.7 L3.3 5 L2 6.3 L0.7 5Z M2 7.1 L3.3 8.4 L2 9.7 L0.7 8.4Z" fill="#5A5A5A"/></svg>
<div style="position:absolute;left:390.3px;top:769.67px;font-size:11.5px;line-height:11.5px;color:#212121;font-weight:400;white-space:nowrap;">17/02/2025</div>
<div style="position:absolute;left:505.6px;top:770.09px;font-size:11px;line-height:11px;color:#212121;font-weight:400;white-space:nowrap;">Motorista Romulo</div>
<div style="position:absolute;left:649px;top:770.09px;font-size:11px;line-height:11px;color:#212121;font-weight:400;white-space:nowrap;">134</div>
<div style="position:absolute;left:815.6px;top:770.09px;font-size:11px;line-height:11px;color:#212121;font-weight:400;white-space:nowrap;">CAFÉ</div>
<div style="position:absolute;left:982.3px;top:770.09px;font-size:11px;line-height:11px;color:#212121;font-weight:400;white-space:nowrap;letter-spacing:-0.42px;">Área 20%, Área 50%, Áre...</div>
<div style="position:absolute;left:1148.6px;top:770.09px;font-size:11px;line-height:11px;color:#212121;font-weight:400;white-space:nowrap;">Silo 1</div>
<div style="position:absolute;left:1315.7px;top:770.09px;font-size:11px;line-height:11px;color:#212121;font-weight:400;white-space:nowrap;">1234</div>
<div style="position:absolute;left:1488px;width:120px;text-align:right;top:770.43px;font-size:10.6px;line-height:10.6px;color:#212121;font-weight:400;white-space:nowrap;">20.000,00</div>
<div style="position:absolute;left:1655px;width:120px;text-align:right;top:770.43px;font-size:10.6px;line-height:10.6px;color:#212121;font-weight:400;white-space:nowrap;">200,00</div>
<svg style="position:absolute;left:1854.6px;top:771.5px;" width="4" height="10" viewBox="0 0 4 10" preserveAspectRatio="none"><path d="M2 0.3 L3.3 1.6 L2 2.9 L0.7 1.6Z M2 3.7 L3.3 5 L2 6.3 L0.7 5Z M2 7.1 L3.3 8.4 L2 9.7 L0.7 8.4Z" fill="#5A5A5A"/></svg>
<div style="position:absolute;left:1832px;top:429px;width:1px;height:371px;background:#E3E3E3;"></div>
<div style="position:absolute;left:370px;top:781px;width:1463px;height:18.5px;background:#F1F1F1;"></div>
<div style="position:absolute;left:391px;top:781px;width:1181px;height:16px;background:#C1C1C1;"></div>
<svg style="position:absolute;left:375px;top:784px;" width="10" height="10" viewBox="0 0 10 10" preserveAspectRatio="none"><path d="M8 1 L3 5 L8 9 Z" fill="#A3A3A3"/></svg>
<svg style="position:absolute;left:1816px;top:784px;" width="10" height="10" viewBox="0 0 10 10" preserveAspectRatio="none"><path d="M2 1 L7 5 L2 9 Z" fill="#555066"/></svg>
<div style="position:absolute;left:1833px;top:781px;width:46px;height:18.5px;background:#F1F1F1;"></div>
<svg style="position:absolute;left:1838px;top:784px;" width="10" height="10" viewBox="0 0 10 10" preserveAspectRatio="none"><path d="M8 1 L3 5 L8 9 Z" fill="#A3A3A3"/></svg>
<svg style="position:absolute;left:1863px;top:784px;" width="10" height="10" viewBox="0 0 10 10" preserveAspectRatio="none"><path d="M2 1 L7 5 L2 9 Z" fill="#A3A3A3"/></svg>
<div style="position:absolute;left:1879px;top:781px;width:21px;height:18.5px;background:#DCDCDC;"></div>
<div style="position:absolute;left:370px;top:799px;width:1530px;height:1px;background:#E6E6E6;"></div>
<div style="position:absolute;left:1882px;top:475px;width:18px;height:306px;background:#F1F1F1;"></div>
<div style="position:absolute;left:1882px;top:496px;width:16px;height:201px;background:#C1C1C1;"></div>
<svg style="position:absolute;left:1884.5px;top:481px;" width="10" height="10" viewBox="0 0 10 10" preserveAspectRatio="none"><path d="M0.5 8 L5 3 L9.5 8 Z" fill="#A3A0A3"/></svg>
<svg style="position:absolute;left:1884.5px;top:764px;" width="10" height="10" viewBox="0 0 10 10" preserveAspectRatio="none"><path d="M0.5 3 L5 8 L9.5 3 Z" fill="#555066"/></svg>
<div style="position:absolute;left:1569.5px;width:100px;text-align:center;top:816.61px;font-size:10.5px;line-height:10.5px;color:#616161;font-weight:400;white-space:nowrap;">1 - 10 de 13</div>
<svg style="position:absolute;left:1694px;top:815px;" width="15" height="15" viewBox="0 0 24 24" preserveAspectRatio="none"><path d="M18.41 16.59L13.82 12l4.59-4.59L17 6l-6 6 6 6zM6 6h2v12H6z" fill="#B0B0B0" fill-rule="evenodd"/></svg>
<svg style="position:absolute;left:1723px;top:815px;" width="15" height="15" viewBox="0 0 24 24" preserveAspectRatio="none"><path d="M15.41 7.41L14 6l-6 6 6 6 1.41-1.41L10.83 12z" fill="#B0B0B0" fill-rule="evenodd"/></svg>
<div style="position:absolute;left:1723.6px;width:120px;text-align:center;top:817.34px;font-size:10.7px;line-height:10.7px;color:#616161;font-weight:400;white-space:nowrap;">Página 1 de 2</div>
<svg style="position:absolute;left:1829px;top:815px;" width="15" height="15" viewBox="0 0 24 24" preserveAspectRatio="none"><path d="M10 6L8.59 7.41 13.17 12l-4.58 4.59L10 18l6-6z" fill="#212121" fill-rule="evenodd"/></svg>
<svg style="position:absolute;left:1857px;top:815px;" width="15" height="15" viewBox="0 0 24 24" preserveAspectRatio="none"><path d="M5.59 7.41L10.18 12l-4.59 4.59L7 18l6-6-6-6zM16 6h2v12h-2z" fill="#212121" fill-rule="evenodd"/></svg>
</body></html>
